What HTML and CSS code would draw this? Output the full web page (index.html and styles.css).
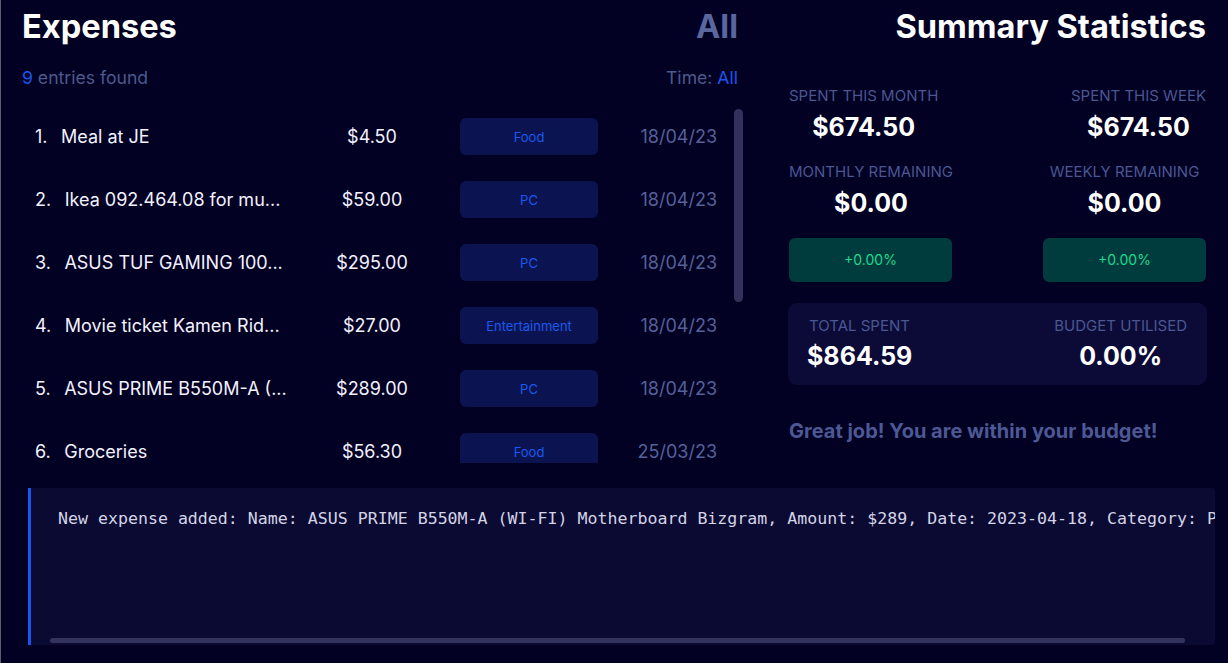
FILE: index.html
```html
<!DOCTYPE html>
<html lang="en">
<head>
<meta charset="utf-8">
<title>Expenses</title>
<link rel="stylesheet" href="styles.css">
</head>
<body>
<div class="app">
  <div class="top">
    <section class="left">
      <div class="head">
        <h1 class="title">Expenses</h1>
        <div class="title dim">All</div>
      </div>
      <div class="sub">
        <div><span class="accent">9</span> entries found</div>
        <div>Time: <span class="accent">All</span></div>
      </div>
      <div class="list-wrap">
        <div class="list">
          <div class="row"><div class="namecell"><span class="idx">1.</span><span class="name">Meal at JE</span></div><div class="amt">$4.50</div><div class="tag">Food</div><div class="date">18/04/23</div></div>
          <div class="row"><div class="namecell"><span class="idx">2.</span><span class="name">Ikea 092.464.08 for mu...</span></div><div class="amt">$59.00</div><div class="tag">PC</div><div class="date">18/04/23</div></div>
          <div class="row"><div class="namecell"><span class="idx">3.</span><span class="name">ASUS TUF GAMING 100...</span></div><div class="amt">$295.00</div><div class="tag">PC</div><div class="date">18/04/23</div></div>
          <div class="row"><div class="namecell"><span class="idx">4.</span><span class="name">Movie ticket Kamen Rid...</span></div><div class="amt">$27.00</div><div class="tag">Entertainment</div><div class="date">18/04/23</div></div>
          <div class="row"><div class="namecell"><span class="idx">5.</span><span class="name">ASUS PRIME B550M-A (...</span></div><div class="amt">$289.00</div><div class="tag">PC</div><div class="date">18/04/23</div></div>
          <div class="row"><div class="namecell"><span class="idx">6.</span><span class="name">Groceries</span></div><div class="amt">$56.30</div><div class="tag">Food</div><div class="date">25/03/23</div></div>
        </div>
        <div class="track"><div class="thumb"></div></div>
      </div>
    </section>
    <section class="right">
      <h1 class="title rt">Summary Statistics</h1>
      <div class="stats">
        <div class="stat c1 j-start"><div class="label">SPENT THIS MONTH</div><div class="value">$674.50</div></div>
        <div class="stat c3 j-end"><div class="label">SPENT THIS WEEK</div><div class="value">$674.50</div></div>
        <div class="stat c1 j-start"><div class="label">MONTHLY REMAINING</div><div class="value">$0.00</div></div>
        <div class="stat c3 j-center"><div class="label">WEEKLY REMAINING</div><div class="value">$0.00</div></div>
        <div class="pct c1">+0.00%</div>
        <div class="pct c3">+0.00%</div>
      </div>
      <div class="total">
        <div class="tcol"><div class="label">TOTAL SPENT</div><div class="value">$864.59</div></div>
        <div class="tcol center"><div class="label">BUDGET UTILISED</div><div class="value">0.00%</div></div>
      </div>
      <div class="msg">Great job! You are within your budget!</div>
    </section>
  </div>
  <div class="console">
    <div class="out">New expense added: Name: ASUS PRIME B550M-A (WI-FI) Motherboard Bizgram, Amount: $289, Date: 2023-04-18, Category: PC</div>
    <div class="hbar"><div class="hthumb"></div></div>
  </div>
</div>
</body>
</html>
```

FILE: styles.css
```css
* { box-sizing: border-box; }
html, body { margin: 0; padding: 0; }
body {
  background: #020023;
  border-left: 1px solid #5e5e66;
  font-family: Inter, "Noto Sans", sans-serif;
  color: #ffffff;
  height: 663px;
  overflow: hidden;
}
.app {
  display: flex;
  flex-direction: column;
  height: 663px;
}
.top {
  display: grid;
  grid-template-columns: 724px 417px;
  column-gap: 43px;
  padding: 5.6px 22px 0 21px;
  height: 463px;
}
.title {
  margin: 0;
  font-size: 32.6px;
  line-height: 40px;
  font-weight: 700;
  color: #ffffff;
}
.title.dim { color: #5a679e; }
.title.rt { text-align: right; }
.head {
  display: flex;
  justify-content: space-between;
  padding-right: 8px;
}
.sub {
  display: flex;
  justify-content: space-between;
  padding-right: 8px;
  margin-top: 20px;
  font-size: 17.6px;
  line-height: 24px;
  color: #4d5a8c;
}
.accent { color: #1a56ee; }
.left { display: flex; flex-direction: column; }
.list-wrap {
  margin-top: 15.9px;
  height: 357.5px;
  display: flex;
  gap: 3px;
  padding-right: 3px;
}
.list {
  flex: 1;
  overflow: hidden;
}
.row {
  display: grid;
  grid-template-columns: 300px 138px 138px 1fr;
  align-items: center;
  height: 63px;
  font-size: 18px;
  color: #f2f2ff;
}
.namecell {
  display: flex;
  gap: 13.5px;
  padding: 0 25px 0 13px;
  white-space: nowrap;
  overflow: hidden;
}
.name { overflow: hidden; text-overflow: ellipsis; }
.amt { text-align: center; padding-right: 38px; }
.tag {
  height: 37px;
  border-radius: 6px;
  background: #0b1450;
  color: #1c58ee;
  font-size: 13px;
  display: flex;
  align-items: center;
  justify-content: center;
}
.date { text-align: right; padding-right: 14px; color: #55629a; }
.track { width: 9px; padding-top: 3.5px; }
.thumb {
  width: 9px;
  height: 193px;
  border-radius: 5px;
  background: #33315c;
}
.right { display: flex; flex-direction: column; }
.stats {
  margin-top: 41px;
  display: grid;
  grid-template-columns: 163px 1fr 163px;
  row-gap: 21px;
}
.c1 { grid-column: 1; }
.c3 { grid-column: 3; }
.stat {
  display: flex;
  flex-direction: column;
  align-items: center;
  gap: 7px;
}
.j-start { justify-self: start; }
.j-end { justify-self: end; }
.j-center { justify-self: center; }
.label {
  font-size: 15px;
  line-height: 18px;
  color: #4a5790;
  white-space: nowrap;
}
.value {
  font-size: 25px;
  line-height: 30px;
  font-weight: 700;
  color: #ffffff;
  white-space: nowrap;
}
.pct {
  width: 163px;
  height: 44px;
  margin-top: -1px;
  border-radius: 6px;
  background: #003c3e;
  color: #1ed98c;
  font-size: 14px;
  display: flex;
  align-items: center;
  justify-content: center;
}
.total {
  margin: 21px -1px 0;
  height: 82px;
  border-radius: 9px;
  background: #0c0b38;
  padding: 14.2px 20px 0 21px;
  display: flex;
  justify-content: space-between;
}
.tcol { display: flex; flex-direction: column; gap: 6px; }
.tcol.center { align-items: center; }
.tcol .value { margin-left: -2px; }
.tcol.center .value { margin-left: 0; }
.msg {
  margin-top: 34px;
  font-size: 20px;
  line-height: 24px;
  font-weight: 700;
  color: #4c5994;
}
.console {
  margin: 25px 13px 0 27px;
  height: 157px;
  background: #0b0a33;
  border-left: 3px solid #1a55f0;
  border-radius: 0 4px 4px 0;
  display: flex;
  flex-direction: column;
  overflow: hidden;
}
.out {
  flex: 1;
  padding: 21.3px 0 0 27px;
  font-family: "DejaVu Sans Mono", "Liberation Mono", monospace;
  font-size: 16.6px;
  line-height: 20px;
  color: #d4d4e6;
  white-space: pre;
  overflow: hidden;
}
.hbar {
  padding: 0 0 2.5px 19px;
}
.hthumb {
  width: 1135px;
  height: 5px;
  border-radius: 3px;
  background: #34335e;
}
```
